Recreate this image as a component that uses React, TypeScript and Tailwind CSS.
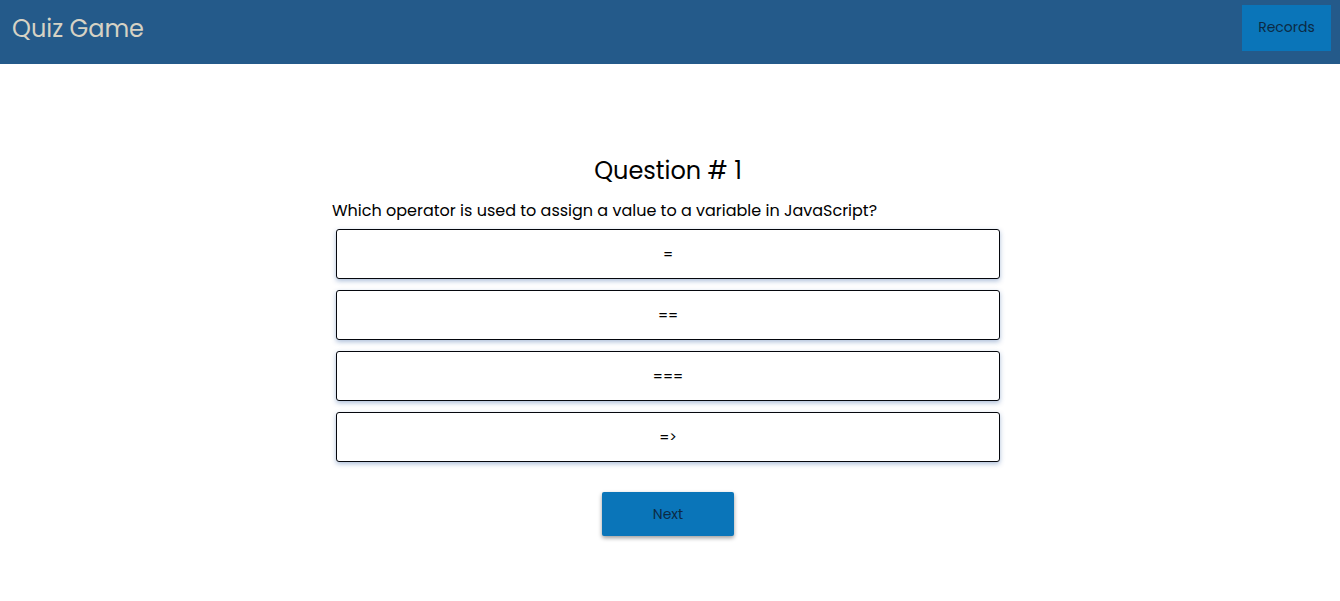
import React, { useState } from 'react';

const question = {
  text: 'Which operator is used to assign a value to a variable in JavaScript?',
  options: ['=', '==', '===', '=>'],
};

const font = { fontFamily: 'Poppins, "Open Sans", "Liberation Sans", sans-serif' };

const App: React.FC = () => {
  const [selected, setSelected] = useState<number | null>(null);

  return (
    <div className="min-h-screen bg-white text-black" style={font}>
      <header className="h-16 bg-[#245a8a] flex items-start justify-between pl-3 pr-[9px]">
        <h1 className="mt-[14px] text-[24px] leading-[30px] text-[#d6d2c4]">Quiz Game</h1>
        <button className="mt-[5px] w-[89px] h-[46px] pb-[2px] bg-[#0a75b9] text-[#0c2a44] text-[14px]">Records</button>
      </header>

      <div className="pr-1">
        <main className="mx-auto w-[672px] pt-[91px] flex flex-col">
          <h2 className="text-center text-[24px] leading-[32px]">Question # 1</h2>
          <p className="mt-[12px] text-[16px] leading-[24px]">{question.text}</p>
          <div className="mt-[6px] px-1 flex flex-col gap-[11px]">
            {question.options.map((opt, i) => (
              <button
                key={i}
                onClick={() => setSelected(i)}
                className={`h-[50px] w-full rounded-[3px] border border-[#05070d] text-[14px] shadow-[0_2px_5px_rgba(70,110,170,0.45)] ${
                  selected === i ? 'bg-[#e6f1fa]' : 'bg-white'
                }`}
              >
                {opt}
              </button>
            ))}
          </div>
          <div className="mt-[30px] flex justify-center">
            <button className="w-[132px] h-[44px] rounded-[2px] bg-[#0a75b9] text-[#0c2a44] text-[14px] shadow-[0_2px_4px_rgba(0,0,0,0.4)]">
              Next
            </button>
          </div>
        </main>
      </div>
    </div>
  );
};

export default App;
